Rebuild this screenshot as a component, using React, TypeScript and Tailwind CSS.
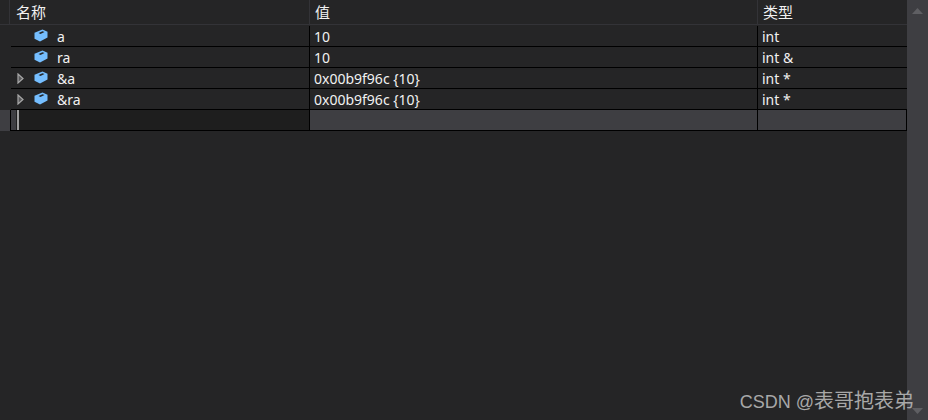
const FONT = "font-['Noto_Sans','Noto_Sans_CJK_SC',sans-serif]";

function Cube() {
  return (
    <svg width="14" height="13" viewBox="0 0 14 13" className="shrink-0">
      <path d="M0.5 3.8 L8.5 0.5 L13.5 2.8 L13.5 8.5 L6 12.5 L0.5 9.8 Z" fill="#75beff" />
      <path d="M4.5 4 L8.5 2.2 L10.5 3.1 L6.5 4.9 Z" fill="#252526" />
    </svg>
  );
}

function Arrow() {
  return (
    <svg width="7" height="11" viewBox="0 0 7 11" className="shrink-0">
      <path d="M1 1 L6 5.5 L1 10 Z" fill="#5a5a5c" stroke="#a8a8a8" strokeWidth="1.2" />
    </svg>
  );
}

const rows = [
  { name: "a", value: "10", type: "int", expand: false },
  { name: "ra", value: "10", type: "int &", expand: false },
  { name: "&a", value: "0x00b9f96c {10}", type: "int *", expand: true },
  { name: "&ra", value: "0x00b9f96c {10}", type: "int *", expand: true },
];

export default function App() {
  return (
    <div className={`${FONT} relative flex h-[420px] w-[928px] overflow-hidden bg-[#252526] text-[14px] text-[#f1f1f1]`}>
      <div className="flex w-[907px] flex-col">
        <div className="mb-[1px] flex h-[25px] border-b border-[#333337] text-[15px] leading-[25px]">
          <div className="w-[10px] border-r border-[#333337]" />
          <div className="w-[300px] border-r border-[#333337] pl-[6px]">名称</div>
          <div className="w-[448px] border-r border-[#333337] pl-[5px]">值</div>
          <div className="flex-1 pl-[5px]">类型</div>
        </div>
        {rows.map((r) => (
          <div key={r.name} className="flex h-[21px] leading-[21px]">
            <div className="w-[11px]" />
            <div className="flex w-[299px] items-center border-r border-b border-r-black border-b-black">
              <div className="flex w-[13px] justify-end pl-[6px]">{r.expand && <Arrow />}</div>
              <div className="mb-[2px] ml-[10px]"><Cube /></div>
              <span className="ml-[9px]">{r.name}</span>
            </div>
            <div className="w-[448px] border-r border-b border-r-black border-b-black pl-[4px]">{r.value}</div>
            <div className="flex-1 border-b border-b-black pl-[4px]">{r.type}</div>
          </div>
        ))}
        <div className="flex h-[21px]">
          <div className="w-[10px] bg-[#3e3e42]" />
          <div className="w-[1px] bg-black" />
          <div className="flex w-[299px] border-r border-b border-black bg-[#1e1e1e]">
            <div className="w-[5px] bg-[#3e3e42]" />
            <div className="ml-[1px] h-[20px] w-[2px] bg-[#a0a0a0]" />
          </div>
          <div className="w-[448px] border-r border-b border-black bg-[#3e3e42]" />
          <div className="flex-1 border-r border-b border-black bg-[#3e3e42]" />
        </div>
      </div>
      <div className="flex w-[21px] flex-col items-center justify-between bg-[#3e3e42] pt-[8px] pb-[6px] pr-[1px]">
        <svg width="11" height="6" viewBox="0 0 11 6"><path d="M5.5 0 L11 6 L0 6 Z" fill="#5f5f63" /></svg>
        <svg width="11" height="6" viewBox="0 0 11 6"><path d="M0 0 L11 0 L5.5 6 Z" fill="#5f5f63" /></svg>
      </div>
      <div className="absolute right-[14px] bottom-[6px] font-['Liberation_Sans','Noto_Sans_CJK_SC',sans-serif] text-[18px] leading-[24px] text-[#a8a8a8]">
        CSDN @<span className="text-[20px]">表哥抱表弟</span>
      </div>
    </div>
  );
}
